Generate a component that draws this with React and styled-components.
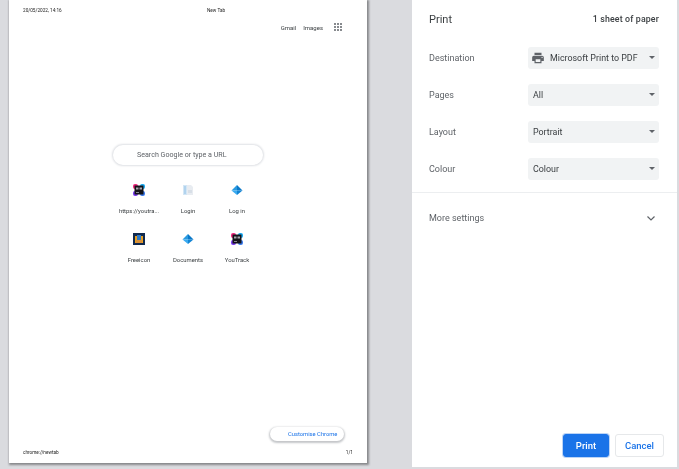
import React from 'react';
import styled, { createGlobalStyle } from 'styled-components';

const GlobalStyle = createGlobalStyle`
    html, body {
        margin: 0;
        padding: 0;
        background: #dadbdf;
        overflow: hidden;
    }

    body {
        font-family: Roboto, "Liberation Sans", sans-serif;
    }
`;

// the reference is a scaled-down capture, so everything is a little soft
const Page = styled.div`
    width: 679px;
    height: 469px;
    display: grid;
    grid-template-columns: 412px 265px;
    background: #dadbdf;
    filter: blur(0.3px);
`;

const Preview = styled.div`
    padding-left: 9px;
`;

const Paper = styled.div`
    width: 358px;
    height: 463px;
    box-sizing: border-box;
    background: #fff;
    box-shadow: 0.5px 0.5px 2px 1px #88898c;
    display: flex;
    flex-direction: column;
    color: #222;
`;

const PrintHeader = styled.div`
    display: grid;
    grid-template-columns: 184px auto;
    padding: 8px 14px 0;
    font-size: 4.7px;
    line-height: 6px;
    color: #222;
`;

const TopLinks = styled.div`
    display: flex;
    align-items: center;
    justify-content: flex-end;
    height: 14px;
    margin-top: 6px;
    padding-right: 25px;
    font-size: 6px;
    color: #3c4043;
`;

const TopLink = styled.span`
    margin-left: 7px;
`;

const AppsGrid = styled.div`
    display: grid;
    grid-template-columns: repeat(3, 2px);
    gap: 1px;
    margin-left: 11px;

    & i {
        width: 2px;
        height: 2px;
        background: #5f6368;
        border-radius: 50%;
    }
`;

const SearchBox = styled.div`
    align-self: center;
    width: 150px;
    height: 20px;
    box-sizing: border-box;
    margin-top: 111px;
    padding-left: 24px;
    border-radius: 10px;
    background: #fff;
    box-shadow: 0 0 2px 1px #dfe1e5;
    font-size: 7.1px;
    line-height: 20px;
    color: #5f6368;
`;

const Tiles = styled.div`
    align-self: center;
    display: grid;
    grid-template-columns: repeat(3, 49px);
    grid-auto-rows: 49px;
    margin-top: 16px;
`;

const Tile = styled.div`
    display: flex;
    flex-direction: column;
    align-items: center;
    gap: 12px;
    padding-top: 3px;
    font-size: 5.9px;
    line-height: 7px;
    color: #3c4043;
    white-space: nowrap;
`;

const TileIcon = styled.svg`
    width: 12px;
    height: 12px;
    flex: none;
`;

const CustomiseRow = styled.div`
    margin-top: auto;
    display: flex;
    justify-content: flex-end;
    padding-right: 23px;
`;

const CustomiseButton = styled.div`
    width: 74px;
    height: 14px;
    box-sizing: border-box;
    padding-left: 18px;
    border-radius: 8px;
    background: #fff;
    box-shadow: 0 1px 2px 1px #c4c6c9;
    font-size: 5.8px;
    line-height: 14px;
    color: #1a73e8;
    white-space: nowrap;
`;

const PrintFooter = styled.div`
    display: flex;
    justify-content: space-between;
    padding: 9px 14px 7px 14px;
    font-size: 4.7px;
    line-height: 6px;
    color: #222;
`;

const Panel = styled.div`
    height: 467px;
    background: #fff;
    display: flex;
    flex-direction: column;
`;

const PanelHeader = styled.div`
    display: flex;
    justify-content: space-between;
    align-items: center;
    height: 38px;
    padding: 0 18px 0 17px;
`;

const Title = styled.div`
    font-size: 11px;
    color: #3c4043;
`;

const Sheets = styled.div`
    font-size: 8.8px;
    font-weight: 500;
    letter-spacing: 0.15px;
    color: #3c4043;
`;

const Settings = styled.div`
    display: flex;
    flex-direction: column;
    gap: 15.5px;
    padding: 9px 18px 12px 17px;
    border-bottom: 1px solid #eceef0;
`;

const Row = styled.div`
    display: flex;
    align-items: center;
    justify-content: space-between;
    height: 21.5px;
`;

const Label = styled.div`
    font-size: 9px;
    color: #5f6368;
`;

const Select = styled.div`
    width: 131px;
    height: 21.5px;
    box-sizing: border-box;
    display: flex;
    align-items: center;
    padding: 0 4.5px 0 5px;
    border-radius: 3px;
    background: #f1f3f4;
    font-size: 8.9px;
    color: #3c4043;
    white-space: nowrap;
`;

const PrinterIcon = styled.svg`
    width: 14px;
    height: 14px;
    margin: 0 5.5px 0 -2.5px;
    fill: #5f6368;
    flex: none;
`;

const Arrow = styled.span`
    margin-left: auto;
    width: 0;
    height: 0;
    border-left: 3.5px solid transparent;
    border-right: 3.5px solid transparent;
    border-top: 3.5px solid #5f6368;
`;

const MoreSettings = styled.div`
    display: flex;
    align-items: center;
    justify-content: space-between;
    height: 51px;
    padding: 0 21px 0 17px;
`;

const Chevron = styled.svg`
    width: 10px;
    height: 7px;
    fill: none;
    stroke: #5f6368;
    stroke-width: 1.2;
`;

const Actions = styled.div`
    margin-top: auto;
    display: flex;
    justify-content: flex-end;
    gap: 6px;
    padding: 0 13px 10px 0;
`;

const ActionButton = styled.div`
    height: 23px;
    width: ${props => props.primary ? '46px' : '49px'};
    box-sizing: border-box;
    border-radius: 3px;
    text-align: center;
    font-size: 9.5px;
    font-weight: 500;
    line-height: 22px;
    background: ${props => props.primary ? '#1a73e8' : '#fff'};
    color: ${props => props.primary ? '#fff' : '#1a73e8'};
    border: 1px solid ${props => props.primary ? '#1a73e8' : '#e6e8ea'};
    box-shadow: ${props => props.primary ? '0 0 0 1px #bcd4f6' : 'none'};
`;

const YouTrackLogo = () => (
    <TileIcon viewBox="0 0 12 12">
        <rect x="0" y="0" width="5" height="5" rx="2" fill="#f0287e" />
        <rect x="7" y="0" width="5" height="5" rx="2" fill="#18a8f0" />
        <rect x="0" y="7" width="5" height="5" rx="2" fill="#7a3cf0" />
        <rect x="7" y="7" width="5" height="5" rx="2" fill="#3c7cf0" />
        <rect x="1.5" y="1.5" width="9" height="9" fill="#14141a" />
        <rect x="3" y="3.5" width="2.5" height="2" fill="#a8a8ae" />
        <rect x="6.5" y="3.5" width="2.5" height="2" fill="#a8a8ae" />
        <rect x="3" y="8" width="3" height="0.8" fill="#a8a8ae" />
    </TileIcon>
);

const DocLogo = () => (
    <TileIcon viewBox="0 0 12 12">
        <rect x="1" y="1" width="4" height="10" fill="#d3e6f5" />
        <rect x="2.5" y="2" width="1" height="8" fill="#8fc0e8" />
        <path d="M5 1h4l2 2v8H5z" fill="#e8ecf1" />
        <rect x="6" y="6" width="4" height="3" fill="#d8dfe7" />
    </TileIcon>
);

const DiamondLogo = () => (
    <TileIcon viewBox="0 0 12 12">
        <path d="M6 1L11.5 6.5L6 6.5z" fill="#0a78c8" />
        <path d="M6 1L0.5 6.5L6 6.5z" fill="#2a9ae0" />
        <path d="M0.5 6.5L6 11L6 6.5z" fill="#3aaaf0" />
        <path d="M11.5 6.5L6 11L6 6.5z" fill="#1284d4" />
    </TileIcon>
);

const FreeiconLogo = () => (
    <TileIcon viewBox="0 0 12 12">
        <rect width="12" height="12" fill="#10294e" />
        <path d="M2 3h8v7H2z" fill="#e8a020" />
        <rect x="4" y="2" width="4" height="5" fill="#2f78c4" />
        <rect x="3" y="7" width="6" height="3" fill="#d8903a" />
    </TileIcon>
);

const tiles = [
    { label: 'https://youtra...', Logo: YouTrackLogo },
    { label: 'Login', Logo: DocLogo },
    { label: 'Log in', Logo: DiamondLogo },
    { label: 'Freeicon', Logo: FreeiconLogo },
    { label: 'Documents', Logo: DiamondLogo },
    { label: 'YouTrack', Logo: YouTrackLogo }
];

const settings = ['Pages:All', 'Layout:Portrait', 'Colour:Colour'];

const App = () => (
    <Page>
        <GlobalStyle />
        <Preview>
            <Paper>
                <PrintHeader>
                    <span>20/05/2022, 14:16</span>
                    <span>New Tab</span>
                </PrintHeader>
                <TopLinks>
                    <TopLink>Gmail</TopLink>
                    <TopLink>Images</TopLink>
                    <AppsGrid>
                        {Array.from({ length: 9 }, (_, i) => <i key={i} />)}
                    </AppsGrid>
                </TopLinks>
                <SearchBox>Search Google or type a URL</SearchBox>
                <Tiles>
                    {tiles.map(({ label, Logo }) => (
                        <Tile key={label}>
                            <Logo />
                            {label}
                        </Tile>
                    ))}
                </Tiles>
                <CustomiseRow>
                    <CustomiseButton>Customise Chrome</CustomiseButton>
                </CustomiseRow>
                <PrintFooter>
                    <span>chrome://newtab</span>
                    <span>1/1</span>
                </PrintFooter>
            </Paper>
        </Preview>
        <Panel>
            <PanelHeader>
                <Title>Print</Title>
                <Sheets>1 sheet of paper</Sheets>
            </PanelHeader>
            <Settings>
                <Row>
                    <Label>Destination</Label>
                    <Select>
                        <PrinterIcon viewBox="0 0 24 24">
                            <path d="M19 8H5c-1.66 0-3 1.34-3 3v6h4v4h12v-4h4v-6c0-1.66-1.34-3-3-3zm-3 11H8v-5h8v5zm3-7c-.55 0-1-.45-1-1s.45-1 1-1 1 .45 1 1-.45 1-1 1zm-1-9H6v4h12V3z" />
                        </PrinterIcon>
                        Microsoft Print to PDF
                        <Arrow />
                    </Select>
                </Row>
                {settings.map(item => {
                    const [label, value] = item.split(':');
                    return (
                        <Row key={label}>
                            <Label>{label}</Label>
                            <Select>
                                {value}
                                <Arrow />
                            </Select>
                        </Row>
                    );
                })}
            </Settings>
            <MoreSettings>
                <Label>More settings</Label>
                <Chevron viewBox="0 0 10 7">
                    <path d="M1.5 1.5L5 5L8.5 1.5" />
                </Chevron>
            </MoreSettings>
            <Actions>
                <ActionButton primary>Print</ActionButton>
                <ActionButton>Cancel</ActionButton>
            </Actions>
        </Panel>
    </Page>
);

export default App;
